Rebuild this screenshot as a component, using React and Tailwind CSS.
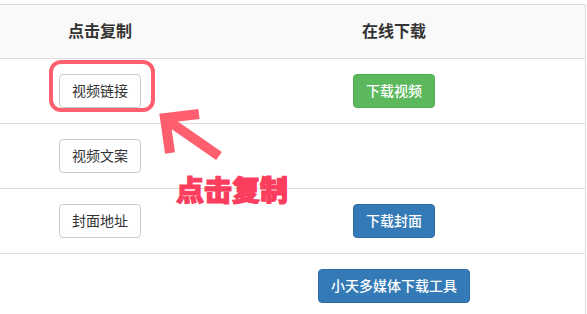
const rows = [
  { copy: "视频链接", download: { label: "下载视频", tone: "green" } },
  { copy: "视频文案", download: null },
  { copy: "封面地址", download: { label: "下载封面", tone: "blue" } },
  { copy: null, download: { label: "小天多媒体下载工具", tone: "blue" } },
]

const tones = {
  green: "bg-[#5cb85c] border-[#4cae4c] text-white font-medium",
  blue: "bg-[#337ab7] border-[#2e6da4] text-white font-medium",
  plain: "bg-white border-[#ccc] text-[#333]",
}

function Btn({ label, tone = "plain" }) {
  return (
    <button className={`border rounded-[4px] px-[12px] py-[6px] text-[14px] leading-[20px] whitespace-nowrap ${tones[tone]}`}>
      {label}
    </button>
  )
}

export default function App() {
  return (
    <div
      className="relative w-[587px] h-[314px] overflow-hidden bg-white pt-[4px]"
      style={{ fontFamily: '"Liberation Sans", "Noto Sans CJK SC", sans-serif' }}
    >
      <div className="w-[586px] border-t border-r border-[#ddd]">
        <div className="grid grid-cols-[200px_1fr] h-[54px] bg-[#f9f9f9] border-b border-[#ddd] text-[16px] font-bold text-[#333]">
          <div className="flex items-center justify-center">点击复制</div>
          <div className="flex items-center justify-center pl-[3px]">在线下载</div>
        </div>
        {rows.map((row, i) => (
          <div key={i} className="grid grid-cols-[200px_1fr] h-[65px] border-b border-[#ddd]">
            <div className="flex items-center justify-center">
              {row.copy && <Btn label={row.copy} />}
            </div>
            <div className="flex items-center justify-center pl-[3px]">
              {row.download && <Btn label={row.download.label} tone={row.download.tone} />}
            </div>
          </div>
        ))}
      </div>

      {/* annotation */}
      <svg className="absolute inset-0 pointer-events-none" width="587" height="314" viewBox="0 0 587 314">
        <rect x="51" y="62" width="102" height="48" rx="10" fill="none" stroke="#fd5f6e" strokeWidth="4" />
        <path d="M167 120 L219 156" stroke="#fd5f6e" strokeWidth="10" fill="none" />
        <path d="M199 114 L165 118 L170 153" stroke="#fd5f6e" strokeWidth="10" fill="none" strokeLinejoin="miter" />
      </svg>
      <span className="absolute left-[176px] top-[175px] text-[28px] leading-[34px] font-black text-[#fb3d5e] [-webkit-text-stroke:1.2px_#fb3d5e]">
        点击复制
      </span>
    </div>
  )
}
